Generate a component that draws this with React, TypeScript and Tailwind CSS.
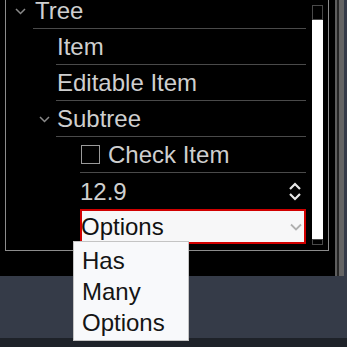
import React from "react";

const Chevron = ({ className = "" }: { className?: string }) => (
  <svg width="11" height="7" viewBox="0 0 11 7" className={className}>
    <path d="M1 1 L5.5 5.5 L10 1" fill="none" stroke="#8a8a8a" strokeWidth="1.5" />
  </svg>
);

export default function App() {
  const font = { fontFamily: '"Liberation Sans", Arial, sans-serif' };
  return (
    <div className="relative w-[347px] h-[347px] overflow-hidden bg-[#353b48]" style={font}>
      <div className="flex w-[344px] h-[276px] bg-black">
        <div className="w-[335px] h-full">
          {/* frame */}
          <div className="ml-[5px] w-[324px] h-[251px] border-x border-b border-[#8c8c8c] flex overflow-hidden">
            <div className="w-[300px] -mt-[7px] flex flex-col text-[24px] text-[#cfcfcf] leading-[35px]">
              {/* Tree */}
              <div className="flex items-center">
                <div className="w-[27px] flex justify-end pr-[7px]">
                  <Chevron />
                </div>
                <div className="flex-1 h-[36px] border-b border-[#4a4a4a] pl-[2px]">Tree</div>
              </div>
              <div className="ml-[50px] h-[36px] border-b border-[#4a4a4a] pl-[1px]">Item</div>
              <div className="ml-[50px] h-[36px] border-b border-[#4a4a4a] pl-[1px]">Editable Item</div>
              {/* Subtree */}
              <div className="flex items-center">
                <div className="w-[50px] flex justify-end pr-[6px]">
                  <Chevron />
                </div>
                <div className="flex-1 h-[36px] border-b border-[#4a4a4a] pl-[1px]">Subtree</div>
              </div>
              <div className="ml-[74px] h-[36px] border-b border-[#4a4a4a] flex items-center">
                <div className="ml-[1px] w-[19px] h-[19px] border-[1.5px] border-[#9a9a9a]" />
                <span className="ml-[8px] leading-[35px]">Check Item</span>
              </div>
              <div className="ml-[74px] h-[36px] flex items-center justify-between">
                <span className="leading-[35px]">12.9</span>
                <svg width="14" height="19" viewBox="0 0 14 19" className="mr-[4px]">
                  <path d="M2 7 L7 2 L12 7" fill="none" stroke="#e6e6e6" strokeWidth="2.2" />
                  <path d="M2 12 L7 17 L12 12" fill="none" stroke="#e6e6e6" strokeWidth="2.2" />
                </svg>
              </div>
              <div className="ml-[74px] h-[35px] border-2 border-[#d10000] bg-[#f7f7f8] flex items-center justify-between">
                <span className="text-[#111] leading-[31px] -ml-[1px]">Options</span>
                <svg width="12" height="8" viewBox="0 0 12 8" className="mr-[2px] mt-[1px]">
                  <path d="M1 1.5 L6 6.5 L11 1.5" fill="none" stroke="#b0b0b0" strokeWidth="1.8" />
                </svg>
              </div>
            </div>
            {/* inner scrollbar */}
            <div className="ml-[6px] w-[11px] pt-[5px] flex flex-col">
              <div className="h-[15px] border border-[#4a4a4a]" />
              <div className="h-[219px] bg-white" />
              <div className="h-[6px] border border-[#4a4a4a]" />
            </div>
          </div>
        </div>
        {/* outer scrollbar strip */}
        <div className="flex h-full">
          <div className="w-[2px] bg-[#5e5e5e]" />
          <div className="w-[2px] bg-[#262626]" />
          <div className="w-[5px] bg-[#646464]" />
        </div>
      </div>
      <div className="h-[62px]" />
      <div className="h-[9px] bg-[#1e2229]" />

      {/* dropdown popup */}
      <div className="absolute left-[73px] top-[241px] w-[116px] h-[100px] bg-[#f8f9fb] border border-[#c4c4c4] pl-[8px] pt-[3px] text-[24px] leading-[31px] text-[#151515]">
        <div>Has</div>
        <div>Many</div>
        <div>Options</div>
      </div>
    </div>
  );
}
